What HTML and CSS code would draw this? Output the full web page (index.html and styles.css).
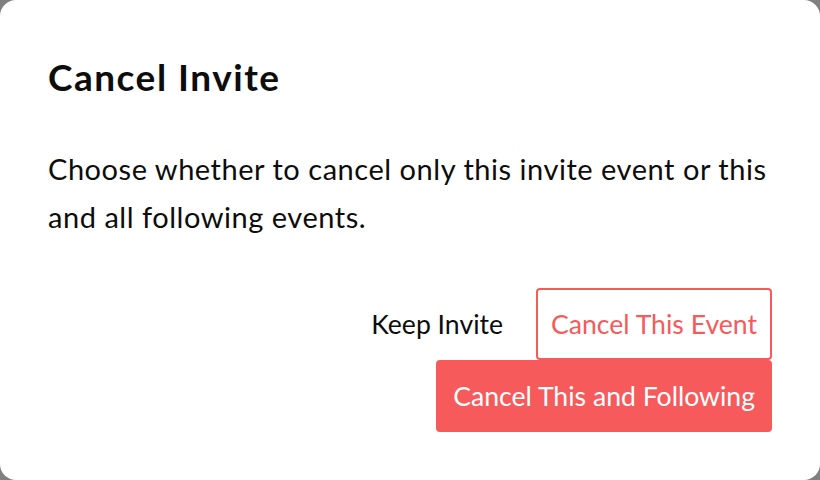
FILE: index.html
```html
<!DOCTYPE html>
<html lang="en">
<head>
    <meta charset="UTF-8">
    <meta name="viewport" content="width=device-width, initial-scale=1.0">
    <title>Cancel Invite</title>
    <link rel="stylesheet" href="styles.css">
</head>
<body>
    <div class="dialog">
        <h1>Cancel Invite</h1>
        <p>Choose whether to cancel only this invite event or this and all following events.</p>

        <div class="actions">
            <button class="btn btn-text">Keep Invite</button>
            <button class="btn btn-outline">Cancel This Event</button>
            <button class="btn btn-primary">Cancel This and Following</button>
        </div>
    </div>
</body>
</html>
```

FILE: styles.css
```css
html, body {
    margin: 0;
    height: 100%;
}
body {
    background: #808080;
    font-family: Lato, "Open Sans", sans-serif;
    color: #0d0d0d;
}
.dialog {
    box-sizing: border-box;
    height: 480px;
    background: #fff;
    border-radius: 16px;
    padding: 53px 48px 48px;
}
h1 {
    margin: 0;
    font-size: 37px;
    line-height: 48px;
    letter-spacing: 1.5px;
    font-weight: 700;
}
p {
    max-width: 722px;
    margin: 44px 0 47px;
    font-size: 29px;
    line-height: 48px;
    letter-spacing: 0.53px;
}
.actions {
    display: flex;
    flex-wrap: wrap;
    justify-content: flex-end;
    align-items: center;
}
.btn {
    font-family: inherit;
    font-size: 26.6px;
    padding: 0 15px;
    height: 72px;
    border-radius: 4px;
    border: 2px solid transparent;
    background: none;
    cursor: pointer;
}
.btn-text {
    color: #0d0d0d;
    margin-right: 16px;
}
.btn-outline {
    padding: 0 13px;
    color: #f65a5b;
    border-color: #f65a5b;
    background: #fff;
}
.btn-primary {
    color: #fff;
    background: #f65a5b;
    border-color: #f65a5b;
}
```
